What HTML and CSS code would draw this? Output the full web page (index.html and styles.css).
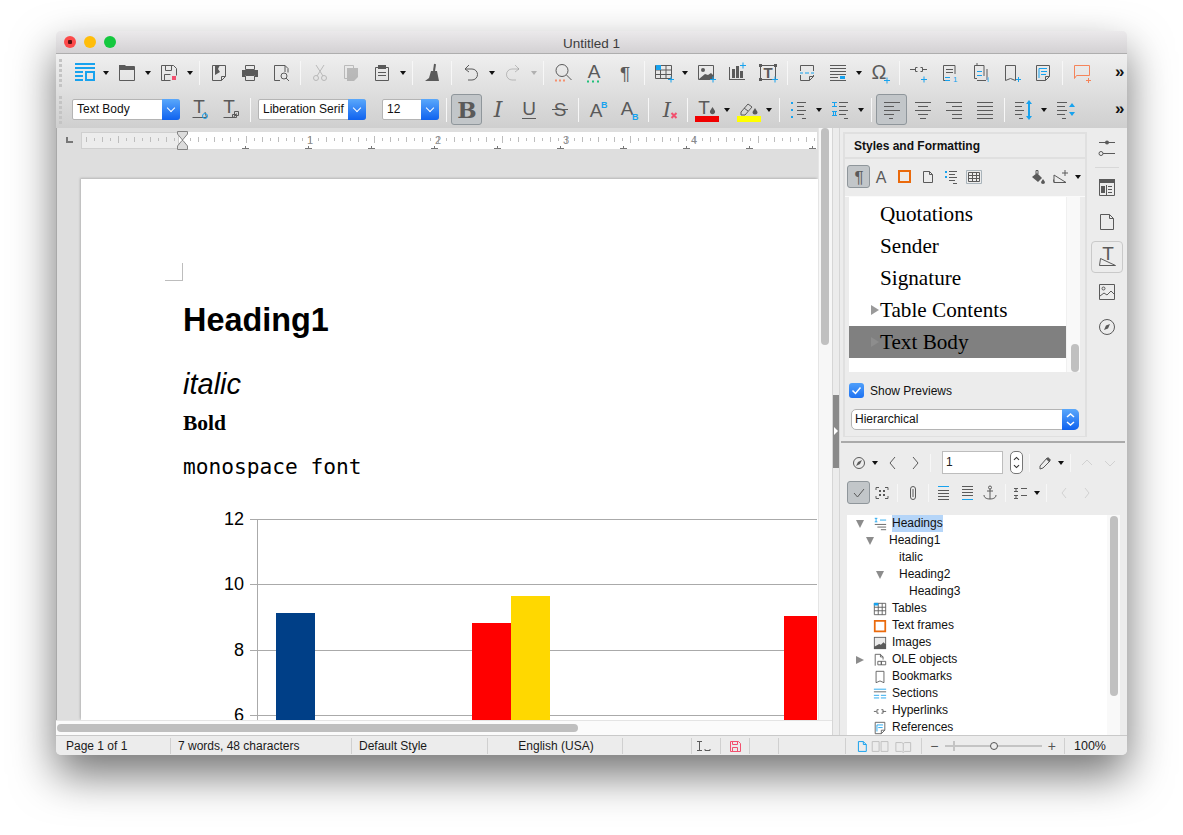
FILE: index.html
```html
<!DOCTYPE html>
<html lang="en">
<head>
<meta charset="utf-8">
<title>Untitled 1</title>
<link rel="stylesheet" href="styles.css">
</head>
<body>
<div class="window">
  <header class="titlebar">
    <div class="lights"><span class="light red"></span><span class="light yellow"></span><span class="light green"></span></div>
    <div class="title">Untitled 1</div>
    <div></div>
  </header>
  <div class="toolbars">
    <div class="tb">
      <span class="grip"></span>
      <span class="b"><svg class="i" viewBox="0 0 22 22"><path class="bl2" d="M1 2h20M1 6h20M1 10h8M1 14h8M1 18h8"/><path class="bl2" d="M12 10h8v8h-8z"/></svg></span><span class="a"></span>
      <span class="b"><svg class="i" viewBox="0 0 22 22"><path d="M3.500 4.500h15v14h-15z"/><path class="f" d="M3 3h6l2 2h8v3H3z"/></svg></span><span class="a"></span>
      <span class="b"><svg class="i" viewBox="0 0 22 22"><path d="M3.500 3.500h12l3 3v7M3.500 3.500v15h9M7.500 3.500v5h6v-5M6.500 18.500v-6h6"/><path class="rf" d="M14 14h4v4h-4z"/></svg></span><span class="a"></span>
      <span class="s"></span>
      <span class="b"><svg class="i" viewBox="0 0 22 22"><path d="M4.500 3.500h13v11l-4 4h-9zM13.500 18.500v-4h4"/><path class="f" d="M7 3h5l-2 4 2 3-5 3z"/></svg></span>
      <span class="b"><svg class="i" viewBox="0 0 22 22"><path d="M6.500 3.500h9v4h-9zM6.500 13.500h9v5h-9z"/><path class="f" d="M3 8h16v7h-3v-2H6v2H3z"/></svg></span>
      <span class="b"><svg class="i" viewBox="0 0 22 22"><path d="M15 10V3.500H4.500v15H10M15 3.500l3 3v4"/><circle cx="14" cy="14" r="3"/><path d="M16 16l3 3"/></svg></span>
      <span class="s"></span>
      <span class="b off"><svg class="i" viewBox="0 0 22 22"><path d="M7 3l7 11M15 3l-7 11"/><circle cx="7" cy="16" r="2.500"/><circle cx="15" cy="16" r="2.500"/></svg></span>
      <span class="b off"><svg class="i" viewBox="0 0 22 22"><path d="M4.500 3.500h9v13h-9z"/><path class="f" d="M7 6h11v9l-4 4H7z"/></svg></span>
      <span class="b"><svg class="i" viewBox="0 0 22 22"><path d="M4.500 5.500h13v13h-13zM7 10.500h8M7 13.500h8"/><path class="f" d="M7 3h8v4H7z"/></svg></span><span class="a"></span>
      <span class="s"></span>
      <span class="b"><svg class="i" viewBox="0 0 22 22"><path d="M14 2l-1 7" stroke-width="2"/><path class="f" d="M10 9h6l2 10H4l4-3z"/></svg></span>
      <span class="s"></span>
      <span class="b"><svg class="i" viewBox="0 0 22 22"><path d="M9 3L5 7l4 3M5 7h7a5.500 5.500 0 0 1 0 11H8"/></svg></span><span class="a"></span>
      <span class="b off"><svg class="i" viewBox="0 0 22 22"><path d="M13 3l4 4-4 3M17 7h-7a5.500 5.500 0 0 0 0 11h4"/></svg></span><span class="a dim"></span>
      <span class="s"></span>
      <span class="b"><svg class="i" viewBox="0 0 22 22"><circle cx="10" cy="8.500" r="6"/><path d="M14.500 13l5 5"/><path class="or2" d="M3 18.500h2M7 18.500h2M11 18.500h2"/></svg></span>
      <span class="b"><svg class="i" viewBox="0 0 22 22"><text class="gl" x="11" y="16" text-anchor="middle" font-size="19">A</text><path class="gr2" d="M4 19.500h2M9 19.500h2M14 19.500h2"/></svg></span>
      <span class="b"><svg class="i" viewBox="0 0 22 22"><text class="gl" x="11" y="18" text-anchor="middle" font-size="19">¶</text></svg></span>
      <span class="s"></span>
      <span class="b"><svg class="i" viewBox="0 0 22 22"><path d="M2.500 3.500h16v13h-16zM2.500 8h16M2.500 12.500h16M7.500 3.500v13M13 3.500v13"/><path class="blf" d="M3 3h5v5H3z"/><path class="bl" d="M15 17.500h6M18 14.500v6"/></svg></span><span class="a"></span>
      <span class="b"><svg class="i" viewBox="0 0 22 22"><path d="M3.500 3.500h15v14h-15z"/><circle class="f" cx="8" cy="8" r="2"/><path class="f" d="M4 17l6-5 3 1 3-2 2 2v4z"/><path class="bl" d="M15 17.500h6M18 14.500v6"/></svg></span>
      <span class="b"><svg class="i" viewBox="0 0 22 22"><path class="f" d="M3 5h1v12h15v1H3zM6 7h3v9H6zM10 4h3v12h-3zM14 9h3v7h-3z"/><path class="bl" d="M14 3.500h6M17 .5v6"/></svg></span>
      <span class="b"><svg class="i" viewBox="0 0 22 22"><path d="M3.500 3.500h15v14h-15z"/><path class="f" d="M2 2h3v3H2zM17 2h3v3h-3zM2 16h3v3H2z"/><text class="gl bd" x="11" y="16" text-anchor="middle" font-size="15">T</text><path class="bl2 thin" d="M15 17.500h6M18 14.500v6"/></svg></span>
      <span class="s"></span>
      <span class="b"><svg class="i" viewBox="0 0 22 22"><path d="M4.500 9V3.500h13V9M4.500 13v5.500h9l4-4V13M13.500 18.500v-4h4"/><path class="bl" d="M4 11h3M9 11h4M15 11h3"/></svg></span>
      <span class="b"><svg class="i" viewBox="0 0 22 22"><path d="M3 3.500h16M3 6.500h16M3 9.500h16M3 12.500h16M3 15.500h8M3 18.500h16"/><path class="blf" d="M13 14h5v3h-5z"/></svg></span><span class="a"></span>
      <span class="b"><svg class="i" viewBox="0 0 22 22"><text class="gl" x="10" y="17" text-anchor="middle" font-size="20">Ω</text><path class="bl" d="M15 18.500h6M18 15.500v6"/></svg></span>
      <span class="s"></span>
      <span class="b"><svg class="i" viewBox="0 0 22 22"><path d="M2 7.500h5M7.500 5.500v4h2M12.500 5.500h2v4h-2M14 7.500h5M7.500 5.500h2"/><path class="bl" d="M13 17.500h6M16 14.500v6"/></svg></span>
      <span class="b"><svg class="i" viewBox="0 0 22 22"><path d="M16 12V3.500H4.500v15h5M7 7.500h7M7 10.500h7"/><path class="bl" d="M6 15.500h5M6 18.500h5"/><text class="ti" x="14" y="20" font-size="8">1</text></svg></span>
      <span class="b"><svg class="i" viewBox="0 0 22 22"><path d="M14 14V3.500H4.500v13H7M7 3.500V1M7 18.500h9M17 7v11"/><path class="bl" d="M7 13.500h5M7 9.500h5"/><text class="ti" x="17" y="20" font-size="8">i</text></svg></span>
      <span class="b"><svg class="i" viewBox="0 0 22 22"><path d="M4.500 3.500h10v15l-5-2-5 2z"/><path class="bl" d="M15 17.500h5M17.500 15v5"/></svg></span>
      <span class="b"><svg class="i" viewBox="0 0 22 22"><path d="M4.500 3.500h13v11l-4 4h-9zM13.500 18.500v-4h4"/><path class="bl" d="M7 6.500h8M7 16V6.500M9 9.500h6M9 12.500h5"/></svg></span>
      <span class="s"></span>
      <span class="b"><svg class="i" viewBox="0 0 22 22"><path class="or" d="M3.500 3.500h15v10h-13l-2 3zM15 18.500h5M17.500 16v5"/></svg></span>
      <span class="more">»</span>
    </div>
    <div class="tb">
      <span class="grip"></span>
      <span class="combo w108"><span class="combo-text">Text Body</span><span class="chev"></span></span>
      <span class="b lead"><svg class="i" viewBox="0 0 22 22"><text class="gl" x="10" y="14" text-anchor="middle" font-size="19">T</text><path d="M3.500 18.500h14L16 13"/><circle class="bl" cx="16" cy="17" r="2.500"/></svg></span>
      <span class="b"><svg class="i" viewBox="0 0 22 22"><text class="gl" x="9" y="14" text-anchor="middle" font-size="19">T</text><path d="M3.500 18.500h10l3-4"/><path d="M14.500 12.500h4v4h-4zM12.500 15.500h4v3h-4z"/></svg></span>
      <span class="s"></span>
      <span class="combo w108 lead"><span class="combo-text">Liberation Serif</span><span class="chev"></span></span>
      <span class="combo w57 gap16"><span class="combo-text">12</span><span class="chev"></span></span>
      <span class="s gap3"></span>
      <span class="b on nudge"><svg class="i" viewBox="0 0 22 22"><text class="gl sb" x="11" y="18.500" text-anchor="middle" font-size="23">B</text></svg></span>
      <span class="b"><svg class="i" viewBox="0 0 22 22"><text class="gl si" x="11" y="18" text-anchor="middle" font-size="22">I</text></svg></span>
      <span class="b"><svg class="i" viewBox="0 0 22 22"><text class="gl" x="11" y="16" text-anchor="middle" font-size="19">U</text><path d="M4 19.500h14"/></svg></span>
      <span class="b"><svg class="i" viewBox="0 0 22 22"><text class="gl" x="11" y="17" text-anchor="middle" font-size="19">S</text><path d="M3 10.500h16"/></svg></span>
      <span class="s narrow"></span>
      <span class="b"><svg class="i" viewBox="0 0 22 22"><text class="gl" x="9" y="18" text-anchor="middle" font-size="19">A</text><text class="tb2" x="14" y="9" font-size="9">B</text></svg></span>
      <span class="b"><svg class="i" viewBox="0 0 22 22"><text class="gl" x="9" y="16" text-anchor="middle" font-size="19">A</text><text class="tb2" x="14" y="21" font-size="9">B</text></svg></span>
      <span class="s"></span>
      <span class="b"><svg class="i" viewBox="0 0 22 22"><text class="gl si" x="10" y="18" text-anchor="middle" font-size="21">I</text><path class="rx" d="M14.500 14l5 5M19.500 14l-5 5"/></svg></span>
      <span class="s"></span>
      <span class="b"><svg class="i" viewBox="0 0 22 22"><text class="gl" x="8" y="15" text-anchor="middle" font-size="19">T</text><path class="f" d="M16.500 8l2.500 4a2.600 2.600 0 1 1-5 0z"/><path class="redbar" d="M-1 17h24v6H-1z"/></svg></span><span class="a pull"></span>
      <span class="b"><svg class="i" viewBox="0 0 22 22"><path d="M3 13l7-8 4 3-7 8H3zM6 9l4 3"/><path class="f" d="M17 9l2.500 4a2.500 2.500 0 1 1-5 0z"/><path class="yelbar" d="M-1 17h24v6H-1z"/></svg></span><span class="a pull"></span>
      <span class="s"></span>
      <span class="b"><svg class="i" viewBox="0 0 22 22"><path class="blf" d="M3 3h2v2H3zM3 10h2v2H3zM3 17h2v2H3z"/><path d="M9 3.500h9M9 7.500h7M9 11.500h9M9 15.500h7M14 19.500h4"/></svg></span><span class="a pull"></span>
      <span class="b"><svg class="i" viewBox="0 0 22 22"><path class="bl" d="M2 3.500h5M4.500 3.500v4M2 7.500h5M2 12.500h5M3.500 12.500v4M5.500 12.500v4M2 16.500h5"/><path d="M9 3.500h9M9 7.500h7M9 11.500h9M9 15.500h7M14 19.500h4"/></svg></span><span class="a pull"></span>
      <span class="s wide"></span>
      <span class="b on"><svg class="i" viewBox="0 0 22 22"><path d="M3 3.500h16M3 7.500h10M3 11.500h16M3 15.500h10M8 19.500h4"/></svg></span>
      <span class="b"><svg class="i" viewBox="0 0 22 22"><path d="M3 3.500h16M6 7.500h10M3 11.500h16M6 15.500h10M8 19.500h6"/></svg></span>
      <span class="b"><svg class="i" viewBox="0 0 22 22"><path d="M3 3.500h16M9 7.500h10M3 11.500h16M9 15.500h10M9 19.500h10"/></svg></span>
      <span class="b"><svg class="i" viewBox="0 0 22 22"><path d="M3 3.500h16M3 7.500h16M3 11.500h16M3 15.500h16M3 19.500h16"/></svg></span>
      <span class="s"></span>
      <span class="b"><svg class="i" viewBox="0 0 22 22"><path d="M2 3.500h9M2 7.500h7M2 11.500h9M2 15.500h7M6 19.500h4"/><path class="bl2" d="M16 4v14"/><path class="blf" d="M13 5l3-4 3 4zM13 17l3 4 3-4z"/></svg></span><span class="a pull"></span>
      <span class="b"><svg class="i" viewBox="0 0 22 22"><path d="M2 3.500h10M2 7.500h8M2 11.500h10M2 15.500h8M7 19.500h4"/><path class="blf" d="M14 8l3-4 3 4zM14 13l3 4 3-4z"/></svg></span>
      <span class="more">»</span>
    </div>
  </div>
  <div class="main">
    <div class="left">
      <div class="doc-row">
        <div class="doc">
          <div class="ruler-row">
            <span class="corner"></span>
            <svg class="ruler" viewBox="0 0 736 19">
              <defs>
                <pattern id="tk" width="64" height="19" patternUnits="userSpaceOnUse" x="37">
                  <path class="rt" d="M.5 5v7M8.500 7v3M16.500 6v5M24.500 7v3M32.500 6v5M40.500 7v3M48.500 6v5M56.500 7v3"/>
                </pattern>
                <pattern id="st" width="63" height="19" patternUnits="userSpaceOnUse" x="35">
                  <path class="rs" d="M3.500 15v3M0 17.500h7"/>
                </pattern>
              </defs>
              <rect class="rbg" y="1" width="736" height="17"/>
              <rect class="rmg" x=".5" y="1.500" width="97" height="16"/>
              <rect fill="url(#tk)" y="0" width="736" height="19"/>
              <rect fill="url(#st)" x="100" y="0" width="636" height="19"/>
              <text class="rn" x="229" y="13" text-anchor="middle">1</text>
              <text class="rn" x="357" y="13" text-anchor="middle">2</text>
              <text class="rn" x="485" y="13" text-anchor="middle">3</text>
              <text class="rn" x="613" y="13" text-anchor="middle">4</text>
              <path class="hg" d="M96.500.5h10V3l-5 6-5-6zM96.500 18.500h10V15l-4.500-5.500h-1L96.500 15z"/>
            </svg>
          </div>
          <div class="page">
            <div class="crop"></div>
            <h1 class="h-one">Heading1</h1>
            <p class="p-italic">italic</p>
            <p class="p-bold">Bold</p>
            <p class="p-mono">monospace font</p>
            <svg class="chart" viewBox="0 0 736 220">
              <path class="grid" d="M169 19.500h567M169 84.500h567M169 150.500h567M169 215.500h567M176.500 19v201"/>
              <rect class="c-blue" x="195" y="113" width="39" height="107"/>
              <rect class="c-red" x="391" y="123" width="39" height="97"/>
              <rect class="c-yel" x="430" y="96" width="39" height="124"/>
              <rect class="c-red" x="703" y="116" width="33" height="104"/>
              <text class="c-l" x="163" y="25" text-anchor="end">12</text>
              <text class="c-l" x="163" y="90" text-anchor="end">10</text>
              <text class="c-l" x="163" y="156" text-anchor="end">8</text>
              <text class="c-l" x="163" y="221" text-anchor="end">6</text>
            </svg>
          </div>
        </div>
        <div class="vscroll"><span class="vthumb"></span></div>
      </div>
      <div class="hscroll"><span class="hthumb"></span></div>
    </div>
    <div class="splitter"><span class="split-handle"></span></div>
    <div class="side">
      <div class="side-top">
        <div class="deck">
          <div class="deck-title">Styles and Formatting</div>
          <div class="deck-tools">
            <span class="n on"><svg class="i" viewBox="0 0 22 22"><text class="gl" x="11" y="17" text-anchor="middle" font-size="17">¶</text></svg></span>
            <span class="n"><svg class="i" viewBox="0 0 22 22"><text class="gl" x="10" y="16.500" text-anchor="middle" font-size="16">A</text></svg></span>
            <span class="n"><svg class="i" viewBox="0 0 22 22"><path class="frame" d="M5 5h11v11H5z"/></svg></span>
            <span class="n"><svg class="i" viewBox="0 0 22 22"><path d="M6.500 5.500h6l3 3v8h-9zM12.500 5.500v3h3"/></svg></span>
            <span class="n"><svg class="i" viewBox="0 0 22 22"><path class="blf" d="M5 5h2v2H5zM5 10h2v2H5z"/><path d="M9 5.500h8M9 8.500h6M9 11.500h8M9 14.500h6M13 17.500h4"/></svg></span>
            <span class="n"><svg class="i" viewBox="0 0 22 22"><path class="pale" d="M3.500 4.500h15v13h-15z"/><path d="M5.500 6.500h11v9h-11zM5.500 9.500h11M5.500 12.500h11M9.500 6.500v9M13.500 6.500v9"/></svg></span>
            <span class="spacer w41"></span>
            <span class="n"><svg class="i" viewBox="0 0 22 22"><path d="M9 8V4.500h2V8"/><path class="f" d="M10 7l5 5-4 4-6-5z"/><path class="f" d="M16 13l2 3a2 2 0 1 1-4 0z"/></svg></span>
            <span class="n"><svg class="i" viewBox="0 0 22 22"><path d="M4 16.500h12L4 9zM4 16.500l-.5-3"/><path d="M15 4v6M12 7h6"/></svg></span>
            <span class="a"></span>
          </div>
          <div class="list">
            <div class="list-items">
              <div class="li">Quotations</div>
              <div class="li">Sender</div>
              <div class="li">Signature</div>
              <div class="li arrowed">Table Contents</div>
              <div class="li arrowed sel">Text Body</div>
            </div>
            <div class="list-sb"><span class="list-thumb"></span></div>
          </div>
          <label class="check"><span class="box"><svg viewBox="0 0 15 15" class="tick"><path d="M3.500 7.500l3 3 5-6"/></svg></span>Show Previews</label>
          <div class="combo hier"><span class="combo-text">Hierarchical</span><span class="updown"><svg viewBox="0 0 17 21" class="ud"><path d="M5 8l3.500-3L12 8M5 13l3.500 3 3.500-3"/></svg></span></div>
        </div>
        <div class="tabs">
          <span class="tab"><svg class="i" viewBox="0 0 22 22"><path d="M3 5.500h16M3 16.500h16"/><circle class="f" cx="11" cy="5.500" r="2"/><circle class="wf" cx="5" cy="16.500" r="2"/></svg></span>
          <span class="tab-sep"></span>
          <span class="tab"><svg class="i" viewBox="0 0 22 22"><path d="M3.500 4.500h15v15h-15zM10.500 9v10M12 10.500h4M12 13.500h4M12 16.500h4"/><path class="f" d="M3 3h16v4H3zM5 10h4v7H5z"/></svg></span>
          <span class="tab"><svg class="i" viewBox="0 0 22 22"><path d="M4.500 3.500h9l4 4v11h-13zM13.500 3.500v4h4"/></svg></span>
          <span class="tab act"><svg class="i" viewBox="0 0 22 22"><text class="gl" x="12" y="14" text-anchor="middle" font-size="19">T</text><path d="M3.500 19.500h16l-15-7z"/></svg></span>
          <span class="tab"><svg class="i" viewBox="0 0 22 22"><path d="M3.500 3.500h15v15h-15zM4 15l4-3 3 2 4-4 3 3"/><circle cx="7.500" cy="7.500" r="1.500"/></svg></span>
          <span class="tab"><svg class="i" viewBox="0 0 22 22"><circle cx="11" cy="11" r="7.500"/><path class="f" d="M14 8l-2 4.500L8 14l2-4.500z"/></svg></span>
        </div>
      </div>
      <div class="divider"></div>
      <div class="navtools">
        <div class="nt first">
          <span class="n"><svg class="i" viewBox="0 0 22 22"><circle cx="11" cy="11" r="5.500"/><path class="f" d="M14 8l-2 4-4 2 2-4z"/></svg></span><span class="a small"></span>
          <span class="n"><svg class="i" viewBox="0 0 22 22"><path d="M14 5l-5 6 5 6"/></svg></span>
          <span class="n"><svg class="i" viewBox="0 0 22 22"><path d="M9 5l5 6-5 6"/></svg></span>
          <span class="s tiny"></span>
          <span class="num">1</span>
          <span class="spin"><svg viewBox="0 0 13 22" class="ud dark"><path d="M3.500 8l3-3 3 3M3.500 14l3 3 3-3"/></svg></span>
          <span class="s tiny"></span>
          <span class="n"><svg class="i" viewBox="0 0 22 22"><path d="M6 14l7-8 3 3-7 7-3 1z"/><path class="f" d="M12 7l2-2 3 3-2 2z"/></svg></span><span class="a small"></span>
          <span class="s tiny"></span>
          <span class="n off faint nudge"><svg class="i" viewBox="0 0 22 22"><path d="M6 13l5-5 5 5"/></svg></span>
          <span class="n off faint"><svg class="i" viewBox="0 0 22 22"><path d="M6 9l5 5 5-5"/></svg></span>
        </div>
        <div class="nt">
          <span class="n on"><svg class="i" viewBox="0 0 22 22"><path d="M6 11l3.500 4L16 7"/></svg></span>
          <span class="n"><svg class="i" viewBox="0 0 22 22"><path d="M5 8V5.500h3M14 5.500h3V8M5 14v2.500h3M14 16.500h3V14"/><path class="f" d="M8 8h2v2H8zM12 8h2v2h-2zM8 12h2v2H8zM12 12h2v2h-2z"/></svg></span>
          <span class="s tiny"></span>
          <span class="n"><svg class="i" viewBox="0 0 22 22"><path d="M8.500 8v7a2.500 2.500 0 0 0 5 0V7a2.500 2.500 0 0 0-5 0v8M11 7v8"/></svg></span>
          <span class="s tiny"></span>
          <span class="n"><svg class="i" viewBox="0 0 22 22"><path class="bl" d="M5 4.500h11"/><path d="M5 8.500h11M5 11.500h11M5 14.500h11M5 17.500h11"/></svg></span>
          <span class="n"><svg class="i" viewBox="0 0 22 22"><path d="M6 4.500h11M6 7.500h11M6 10.500h11M6 13.500h11"/><path class="bl" d="M6 17.500h11"/></svg></span>
          <span class="n"><svg class="i" viewBox="0 0 22 22"><circle cx="11" cy="5.500" r="1.500"/><path d="M11 7v10M8 9h6M5 13c0 3 3 4 6 4s6-1 6-4"/></svg></span>
          <span class="s tiny"></span>
          <span class="n"><svg class="i" viewBox="0 0 22 22"><path d="M4 6.500h4M6 6.500v3M4 9.500h4M11 6.500h6M4 13.500h4M6 13.500v3M4 16.500h4M11 13.500h6"/></svg></span><span class="a small"></span>
          <span class="s tiny"></span>
          <span class="n off faint gap2"><svg class="i" viewBox="0 0 22 22"><path d="M13 6l-4 5 4 5"/></svg></span>
          <span class="n off faint"><svg class="i" viewBox="0 0 22 22"><path d="M9 6l4 5-4 5"/></svg></span>
        </div>
      </div>
      <div class="tree-wrap">
        <div class="tree">
          <div class="tr"><span class="tw down"></span><svg class="ti-ic" viewBox="0 0 16 16"><path class="bl" d="M2 1.500h3M3.500 1.500v4M2 5.500h3M8 3.500h7"/><path d="M2 8.500h13M5 11.500h10M9 14.500h6"/></svg><span class="txt hl">Headings</span></div>
          <div class="tr lv1"><span class="tw down"></span><span class="txt near">Heading1</span></div>
          <div class="tr lv-i">italic</div>
          <div class="tr lv2"><span class="tw down"></span><span class="txt near">Heading2</span></div>
          <div class="tr lv3">Heading3</div>
          <div class="tr"><span class="tw"></span><svg class="ti-ic" viewBox="0 0 16 16"><path d="M1.500 1.500h13v13h-13zM1.500 6h13M1.500 10h13M6 1.500v13M10.500 1.500v13"/><path class="blf" d="M1 1h5v3H1z"/></svg><span class="txt">Tables</span></div>
          <div class="tr"><span class="tw"></span><svg class="ti-ic" viewBox="0 0 16 16"><path class="frame" d="M2 2h12v12H2z"/></svg><span class="txt">Text frames</span></div>
          <div class="tr"><span class="tw"></span><svg class="ti-ic" viewBox="0 0 16 16"><path class="f" d="M1 1h14v14H1z"/><path class="wf2" d="M2 2h12v7l-2-2-3 3-2-1-5 3zM5 3.500a1.500 1.500 0 1 1 0 3 1.500 1.500 0 0 1 0-3z"/></svg><span class="txt">Images</span></div>
          <div class="tr"><span class="tw right"></span><svg class="ti-ic" viewBox="0 0 16 16"><path d="M2.500 14.500v-13h6l3 3v3M8.500 1.500v3h3"/><path d="M5.500 9.500h4v4h-4zM9.500 9.500h5v4h-5z"/></svg><span class="txt">OLE objects</span></div>
          <div class="tr"><span class="tw"></span><svg class="ti-ic" viewBox="0 0 16 16"><path d="M3.500 1.500h9v13l-4.500-2-4.500 2z"/></svg><span class="txt">Bookmarks</span></div>
          <div class="tr"><span class="tw"></span><svg class="ti-ic" viewBox="0 0 16 16"><path class="bl" d="M1 2.500h14"/><path d="M1 5.500h14"/><path class="bl" d="M1 9.500h6M9 9.500h6M1 12.500h6M9 12.500h6"/></svg><span class="txt">Sections</span></div>
          <div class="tr"><span class="tw"></span><svg class="ti-ic" viewBox="0 0 16 16"><path d="M1 8.500h3M4.500 6.500v4h2M9.500 6.500h2v4h-2M11 8.500h4M4.500 6.500h2"/></svg><span class="txt">Hyperlinks</span></div>
          <div class="tr"><span class="tw"></span><svg class="ti-ic" viewBox="0 0 16 16"><path d="M2.500 1.500h11v9l-4 4h-7zM9.500 14.500v-4h4"/><path class="bl" d="M4.500 4.500h7M4.500 12V4.500M6 7.500h5"/></svg><span class="txt">References</span></div>
        </div>
        <div class="tree-sb"><span class="tree-thumb"></span></div>
      </div>
    </div>
  </div>
  <footer class="status">
    <span class="cell">Page 1 of 1</span>
    <span class="cell tight">7 words, 48 characters</span>
    <span class="cell tight">Default Style</span>
    <span class="cell mid">English (USA)</span>
    <span class="cell"></span>
    <span class="cell ctr"><svg class="st-ic" viewBox="0 0 22 16"><path d="M2 3.500h5M2 12.500h5M4.500 3.500v9M10 12.500h5M10 11v1.500M15 11v1.500"/></svg></span>
    <span class="cell ctr"><svg class="st-ic save" viewBox="0 0 16 16"><path d="M3.500 3.500h8l2 2v8h-10zM5.500 3.500v3h5v-3M5.500 13.500v-4h5v4"/></svg></span>
    <span class="cell"></span>
    <span class="cell"></span>
    <span class="cell views"><svg class="vw" viewBox="0 0 70 16"><path class="bl" d="M6.500 3.500h5l3 3v7h-8zM11.500 3.500v3h3"/><path class="lt" d="M20.500 3.500h7v10h-7zM29.500 3.500h7v10h-7zM44.500 4.500h6l1.500 1 1.500-1h6v9h-6l-1.500 1-1.500-1h-6zM52 5.500v8"/></svg></span>
    <span class="cell zoom"><span class="zm">−</span><span class="slider"><span class="mark"></span><span class="knob"></span></span><span class="zm">+</span></span>
    <span class="cell pct"><span class="pct-in">100%</span></span>
  </footer>
</div>
</body>
</html>
```

FILE: styles.css
```css
* { box-sizing: border-box; }
html, body { margin: 0; height: 100%; }
body { background: #fff; font-family: "Liberation Sans", Arial, sans-serif; font-size: 12px; color: #1a1a1a; overflow: hidden; padding-top: 31px; }

.window { margin-left: 56px; width: 1071px; height: 724px; display: flex; flex-direction: column; border-radius: 5px; background: #ececec; box-shadow: 0 20px 44px rgba(0,0,0,.55); }

.titlebar { height: 23px; flex: none; display: grid; grid-template-columns: 1fr auto 1fr; align-items: center; background: linear-gradient(#ebe9eb, #d3d1d3); border-bottom: 1px solid #aeaeae; border-radius: 5px 5px 0 0; }
.lights { display: flex; gap: 8px; padding-left: 8px; }
.light { width: 12px; height: 12px; border-radius: 50%; }
.red { background: radial-gradient(circle, #5a1010 0 2px, #fc4a4a 2.500px); }
.yellow { background: #ffbd0a; }
.green { background: #14c83e; }
.title { font-size: 13.500px; color: #3d3d3d; padding-top: 2px; }

.toolbars { height: 74px; flex: none; background: linear-gradient(#efefef, #cfcfcf); }
.tb { height: 37px; display: flex; align-items: center; padding-left: 3px; }
.grip { width: 3px; height: 28px; margin-right: 7.500px; background: repeating-linear-gradient(#c4c4c4 0 3px, transparent 3px 5px); flex: none; }
.tb .grip + .combo { margin-left: 2.500px; }
.b { width: 31px; height: 31px; flex: none; display: flex; align-items: center; justify-content: center; }
.b.lead { margin-left: 4px; }
.combo.lead { margin-left: 4px; }
.nudge { margin-left: 1px; }
.gap2 { margin-left: 2px; }
.gap3 { margin-left: 3px; }
.gap16 { margin-left: 16px; }
.on { background: #c2c6c9; border: 1px solid #8f969b; border-radius: 3px; }
.off svg { opacity: .32; }
.off.faint svg { opacity: .18; }
.a { width: 11px; height: 10px; flex: none; display: flex; align-items: center; justify-content: center; }
.a::after { content: ""; border-left: 3.500px solid transparent; border-right: 3.500px solid transparent; border-top: 4px solid #111; }
.a.dim::after { border-top-color: #b0b0b0; }
.a.pull { padding-right: 2px; }
.s { width: 8px; height: 24px; flex: none; display: flex; justify-content: center; }
.s.narrow { width: 7px; }
.s.wide { width: 9px; }
.s::before { content: ""; width: 1px; background: #f7f7f7; }
.more { margin-left: auto; width: 12px; font-size: 17px; font-weight: bold; color: #111; flex: none; line-height: 1; padding-bottom: 3px; }

.i { width: 22px; height: 22px; display: block; fill: none; stroke: #5a5a5a; stroke-width: 1; overflow: visible; }
.f { fill: #5a5a5a; stroke: none; }
.bl { stroke: #17a2ee; }
.bl2 { stroke: #17a2ee; stroke-width: 2; }
.bl2.thin { stroke-width: 1; }
.blf { fill: #17a2ee; stroke: none; }
.or { stroke: #f5845a; }
.or2 { stroke: #f5906e; stroke-width: 2; }
.gr2 { stroke: #22c07a; stroke-width: 2; }
.rf { fill: #f2506e; stroke: none; }
.rx { stroke: #f2506e; stroke-width: 2; }
.redbar { fill: #f00000; stroke: none; }
.yelbar { fill: #ffff00; stroke: none; }
.wf { fill: #ececec; }
.wf2 { fill: #ececec; stroke: none; }
.pale { stroke: #a9b4bb; stroke-width: 1; }
.frame { stroke: #ea6a0c; stroke-width: 2; }
.gl { fill: #5a5a5a; stroke: none; font-family: "Liberation Sans", sans-serif; }
.bd { font-weight: bold; }
.sb { font-family: "DejaVu Serif", serif; font-weight: bold; }
.si { font-family: "DejaVu Serif", serif; font-style: italic; }
.ti { fill: #17a2ee; stroke: none; font-family: "Liberation Sans", sans-serif; }
.tb2 { fill: #17a2ee; stroke: none; font-family: "Liberation Sans", sans-serif; font-weight: bold; }

.combo { height: 21px; flex: none; display: flex; background: #fff; border: 1px solid #b4b4b4; border-radius: 2px; align-items: stretch; font-size: 12px; color: #111; }
.w108 { width: 108px; }
.w57 { width: 57px; }
.combo-text { flex: 1; padding-left: 4px; line-height: 19px; overflow: hidden; white-space: nowrap; }
.chev { width: 18px; margin: -1px -1px -1px 0; flex: none; background: linear-gradient(#5aa8fb, #0f62ef); border-radius: 0 3px 3px 0; display: flex; align-items: center; justify-content: center; }
.chev::after { content: ""; width: 5px; height: 5px; margin-top: -3px; border-right: 1.500px solid #fff; border-bottom: 1.500px solid #fff; transform: rotate(45deg); }

.main { flex: 1; min-height: 0; display: flex; }
.left { width: 776px; flex: none; display: flex; flex-direction: column; }
.doc-row { flex: 1; min-height: 0; display: flex; }
.doc { width: 762px; flex: none; display: flex; flex-direction: column; background: #dedede; overflow: hidden; border-left: 1px solid #a9a9a9; }
.ruler-row { height: 51px; flex: none; padding: 3px 0 0 24px; position: relative; }
.corner { position: absolute; left: 9px; top: 9px; width: 7px; height: 6px; border-left: 2px solid #777; border-bottom: 2px solid #777; }
.ruler { width: 736px; height: 19px; display: block; overflow: visible; }
.rbg { fill: #fff; }
.rmg { fill: #ececec; stroke: #cfcfcf; }
.rt { stroke: #bdbdbd; fill: none; shape-rendering: crispEdges; }
.rs { stroke: #777; fill: none; shape-rendering: crispEdges; }
.rn { font-size: 11px; fill: #8a8a8a; font-family: "Liberation Sans", sans-serif; }
.hg { fill: #dcdcdc; stroke: #848484; }

.page { margin-left: 24px; flex: 1; min-height: 0; background: #fff; overflow: hidden; box-shadow: -1px -1px 2px #b5b5b5; color: #000; }
.crop { width: 18px; height: 18px; margin: 84px 0 0 84px; border-right: 1px solid #bdbdbd; border-bottom: 1px solid #bdbdbd; }
.h-one { margin: 19px 0 0 102px; font-size: 32.400px; line-height: 40px; font-weight: bold; }
.p-italic { margin: 27px 0 0 102px; font-size: 29px; line-height: 34px; font-style: italic; }
.p-bold { margin: 9px 0 0 102px; font-family: "Liberation Serif", serif; font-size: 21.500px; line-height: 26px; font-weight: bold; }
.p-mono { margin: 18px 0 0 102px; font-family: "DejaVu Sans Mono", monospace; font-size: 21.200px; line-height: 26px; }
.chart { display: block; width: 736px; height: 220px; margin-top: 20px; }
.grid { stroke: #aaa; fill: none; }
.c-blue { fill: #003f87; }
.c-red { fill: #ff0000; }
.c-yel { fill: #ffd800; }
.c-l { font-size: 18px; fill: #000; font-family: "Liberation Sans", sans-serif; }

.vscroll { width: 14px; flex: none; background: #f7f7f7; border-left: 1px solid #e5e5e5; padding: 0 0 0 2px; }
.vthumb { display: block; width: 8px; height: 217px; background: #c0c0c0; border-radius: 4px; }
.hscroll { height: 15px; flex: none; background: #fbfbfb; border-top: 1px solid #e4e4e4; padding: 3px 0 0 1px; }
.hthumb { display: block; width: 521px; height: 8px; background: #bfbfbf; border-radius: 4px; }

.splitter { width: 8px; flex: none; background: #ececec; border-left: 1px solid #d6d6d6; border-right: 1px solid #d6d6d6; padding-top: 267px; }
.split-handle { display: block; width: 6px; height: 73px; background: #8a8a8a; position: relative; }
.split-handle::after { content: ""; position: absolute; left: 1px; top: 32px; border-left: 4px solid #fff; border-top: 4px solid transparent; border-bottom: 4px solid transparent; }

.side { flex: 1; min-width: 0; display: flex; flex-direction: column; background: #ececec; }
.side-top { height: 313px; flex: none; display: flex; }
.deck { width: 244px; flex: none; margin: 4px 0 0 3px; height: 305px; border: 2px solid #e0e0e0; border-bottom-width: 1px; display: flex; flex-direction: column; }
.deck-title { height: 25px; flex: none; padding-left: 9px; font-size: 12px; font-weight: bold; line-height: 24px; color: #111; border-bottom: 2px solid #e0e0e0; }
.deck-tools { height: 38px; flex: none; display: flex; align-items: center; padding: 0 0 2px 2px; border-bottom: 1px solid #fafafa; }
.n { width: 23px; height: 23px; flex: none; display: flex; align-items: center; justify-content: center; }
.spacer { flex: none; }
.w41 { width: 41px; }
.list { height: 175px; flex: none; margin: 0 5px 0 4px; display: flex; background: #fff; overflow: hidden; }
.list-items { flex: 1; min-width: 0; margin-top: 1px; }
.li { height: 32px; line-height: 32px; padding-left: 31px; font-family: "Liberation Serif", serif; font-size: 21.200px; color: #000; position: relative; }
.arrowed::before { content: ""; position: absolute; left: 22px; top: 11px; border-left: 8px solid #9a9a9a; border-top: 5px solid transparent; border-bottom: 5px solid transparent; }
.sel { background: #808080; }
.sel::before { border-left-color: #8d8d8d; }
.list-sb { width: 14px; flex: none; background: #f9f9f9; padding: 147px 0 0 4px; border-left: 1px solid #f0f0f0; }
.list-thumb { display: block; width: 8px; height: 28px; background: #c0c0c0; border-radius: 4px; }
.check { display: flex; align-items: center; gap: 6px; height: 15px; margin: 11px 0 0 4px; font-size: 12px; color: #111; flex: none; }
.box { width: 15px; height: 15px; background: linear-gradient(#4f9ffa, #1e72f2); border-radius: 3px; flex: none; }
.tick { display: block; fill: none; stroke: #fff; stroke-width: 1.500; }
.hier { width: 228px; margin: 11px 0 0 6px; border-radius: 5px; }
.hier .combo-text { padding-left: 3px; }
.updown { width: 17px; margin: -1px -1px -1px 0; flex: none; background: linear-gradient(#5aa8fb, #0f62ef); border-radius: 0 5px 5px 0; }
.ud { display: block; width: 100%; height: 100%; fill: none; stroke: #fff; stroke-width: 1.500; }
.ud.dark { stroke: #333; stroke-width: 1.300; }

.tabs { width: 40px; flex: none; padding-top: 2.500px; display: flex; flex-direction: column; align-items: center; }
.tab { width: 32px; height: 35px; flex: none; display: flex; align-items: center; justify-content: center; }
.tab-sep { width: 24px; height: 1px; background: #d8d8d8; margin: 1.500px 0 1.500px; flex: none; }
.tab.act { height: 32px; margin: 1.500px 0; border: 1px solid #c9c9c9; border-radius: 4px; }

.divider { height: 2px; flex: none; margin: 0 2px 0 1px; background: #aaa; }
.navtools { height: 72px; flex: none; padding: 8px 0 0 7px; }
.nt { height: 23px; display: flex; align-items: center; margin-top: 7px; }
.nt.first { margin-top: 0; }
.a.small { margin-left: -1px; }
.s.tiny { height: 18px; }
.num { width: 61px; height: 23px; flex: none; margin-left: 8px; background: #fff; border: 1px solid #bdbdbd; padding-left: 3px; line-height: 21px; color: #222; }
.spin { width: 13px; height: 23px; flex: none; margin: 0 2px 0 7px; background: #fff; border: 1px solid #777; border-radius: 5px; }

.tree-wrap { flex: 1; min-height: 0; display: flex; padding-left: 7px; }
.tree { width: 260px; flex: none; background: #fff; overflow: hidden; }
.tr { height: 17px; display: flex; align-items: center; font-size: 12px; color: #111; white-space: nowrap; }
.tw { width: 26px; flex: none; display: flex; justify-content: center; }
.tw.down::after { content: ""; border-left: 4.500px solid transparent; border-right: 4.500px solid transparent; border-top: 8px solid #8c8c8c; }
.tw.right::after { content: ""; border-top: 4.500px solid transparent; border-bottom: 4.500px solid transparent; border-left: 8px solid #8c8c8c; }
.ti-ic { width: 14px; height: 14px; flex: none; fill: none; stroke: #5a5a5a; stroke-width: 1; }
.txt { margin-left: 5px; line-height: 17px; }
.txt.near { margin-left: 6px; }
.hl { background: #b5d5f8; }
.lv1 { padding-left: 10px; }
.lv2 { padding-left: 20px; }
.lv3 { padding: 0 0 1px 62px; }
.lv-i { padding: 0 0 1px 52px; }
.tree-sb { width: 13px; flex: none; padding: 1px 0 0 3px; background: #f9f9f9; }
.tree-thumb { display: block; width: 8px; height: 180px; background: #c0c0c0; border-radius: 4px; }

.status { height: 20px; flex: none; display: grid; grid-template-columns: 114px 181px 136px 135px 69px 29px 29px 29px 67px 76px 143px 1fr; background: #ececec; border-top: 1px solid #c9c9c9; border-radius: 0 0 5px 5px; font-size: 12px; color: #1a1a1a; }
.cell { display: flex; align-items: center; padding-left: 8px; border-left: 1px solid #d0d0d0; white-space: nowrap; margin-top: 2px; margin-bottom: 1px; line-height: 15px; }
.cell:first-child { border-left: 0; padding-left: 10px; }
.cell.tight { padding-left: 7px; }
.mid { justify-content: center; padding-left: 2px; }
.ctr { justify-content: center; padding-left: 0; }
.st-ic { width: 22px; height: 16px; fill: none; stroke: #5a5a5a; stroke-width: 1; }
.st-ic.save { width: 16px; stroke: #f2506e; }
.views { padding-left: 6px; }
.vw { width: 70px; height: 16px; fill: none; stroke-width: 1; }
.lt { stroke: #c0c0c0; }
.zoom { padding: 0 8px; gap: 6px; }
.zm { color: #555; font-size: 14px; line-height: 14px; width: 10px; text-align: center; }
.slider { width: 97px; height: 2px; background: #c4c4c4; position: relative; flex: none; }
.mark { position: absolute; left: 8px; top: -4px; width: 2px; height: 10px; background: #c4c4c4; }
.knob { position: absolute; left: 45px; top: -3px; width: 8px; height: 8px; border-radius: 50%; background: #ececec; border: 1px solid #555; }
.pct { padding-left: 9px; }
.pct-in { font-size: 12.500px; color: #1a1a1a; }
```
